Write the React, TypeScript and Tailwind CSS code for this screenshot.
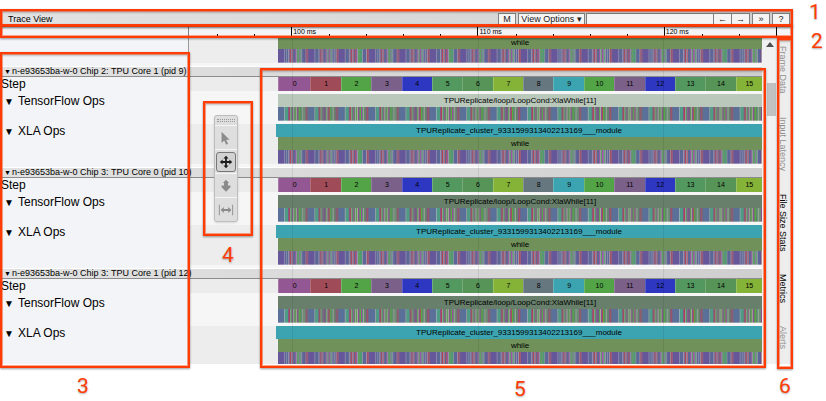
import type { ReactNode } from "react";

type Stripe = [offset: number, width: number, color: string];

const PERIOD = 30;
const STEPS = 16;

const OPS_STRIPES: Stripe[] = [
  [0, 6, "#5b7098"], [6, 1, "#93a9b5"], [7, 3, "#4f9c86"], [10, 1, "#8d548f"],
  [11, 1, "#b0424e"], [12, 1, "#8da08f"], [13, 1, "#54936b"], [14, 1, "#8c5f93"],
  [17, 1, "#59a251"], [18, 1, "#a3a99b"], [19, 1, "#8b5290"], [21, 1, "#4fb040"],
  [23, 1, "#5c9677"], [24, 1, "#9aa59c"], [27, 1, "#84538b"], [28, 1, "#a6525e"],
  [29, 1, "#70628f"],
];

const OPS_EXTRAS: Stripe[][] = [
  [[15, 1, "#96a896"], [25, 2, "#6f8c74"]],
  [[20, 1, "#ad4d58"], [15, 2, "#745d86"]],
  [[22, 1, "#a948a0"], [16, 1, "#99a99b"]],
];

const XLA_STRIPES: Stripe[] = [
  [0, 6, "#66569a"], [6, 1, "#8d85ad"], [7, 3, "#5b6797"], [10, 1, "#9b91b0"],
  [11, 1, "#7d6b91"], [12, 1, "#b34550"], [13, 1, "#8f88a6"], [14, 1, "#b46b78"],
  [15, 2, "#5b6797"], [17, 1, "#9859a0"], [18, 1, "#9b96a7"], [19, 2, "#5e9d63"],
  [21, 1, "#8c8199"], [22, 1, "#61a878"], [23, 1, "#9495a5"], [24, 3, "#5c6698"],
  [27, 1, "#a5919f"], [28, 1, "#a34e66"], [29, 1, "#9b5d78"],
];

const XLA_EXTRAS: Stripe[][] = [
  [[8, 1, "#7f89a9"], [26, 1, "#67568f"]],
  [[20, 1, "#a34eb0"], [25, 1, "#8b8fa9"]],
  [[16, 1, "#a85567"], [21, 2, "#4f9c70"]],
];

function Stripes({ kind }: { kind: "ops" | "xla" }) {
  const base = kind === "ops" ? OPS_STRIPES : XLA_STRIPES;
  const extras = kind === "ops" ? OPS_EXTRAS : XLA_EXTRAS;
  const fill = kind === "ops" ? "#688069" : "#75719a";
  return (
    <svg
      className="block h-[14px] w-full"
      viewBox={`0 0 ${PERIOD * STEPS - 2} 14`}
      preserveAspectRatio="none"
      aria-hidden="true"
    >
      <rect width={PERIOD * STEPS} height="14" fill={fill} />
      {Array.from({ length: STEPS }, (_, step) =>
        [...base, ...extras[step % 3]].map(([offset, width, color], i) => (
          <rect key={`${step}-${i}`} x={step * PERIOD + offset} width={width} height="14" fill={color} />
        )),
      )}
      <rect y="13" width={PERIOD * STEPS} height="1" fill="#ffffff" opacity="0.3" />
    </svg>
  );
}

const STEP_COLORS = [
  "bg-[#935893]", "bg-[#a04b58]", "bg-[#52a446]", "bg-[#7b6089]",
  "bg-[#2d37c1]", "bg-[#53985f]", "bg-[#579458]", "bg-[#85b338]",
  "bg-[#67777f]", "bg-[#3ca4b0]", "bg-[#52a446]", "bg-[#7b6089]",
  "bg-[#2d37c1]", "bg-[#53985f]", "bg-[#579458]", "bg-[#85b338]",
];

function StepBar() {
  return (
    <div className="grid h-[14px] grid-cols-[32fr_repeat(14,30fr)_26fr]">
      {STEP_COLORS.map((color, i) => (
        <div
          key={i}
          className={`${color} border-l border-white/20 text-center text-[7px] leading-[14px] text-black`}
        >
          {i}
        </div>
      ))}
    </div>
  );
}

function Bar({ className, clipped, children }: { className: string; clipped?: boolean; children: ReactNode }) {
  return (
    <div
      className={`truncate text-center text-[8px] text-black ${
        clipped ? "h-[11px] leading-[9px]" : "h-[13px] leading-[13px]"
      } ${className}`}
    >
      {children}
    </div>
  );
}

function Track({ label, collapsible, padded, shade, children }: {
  label?: string;
  collapsible?: boolean;
  padded?: boolean;
  shade: string;
  children: ReactNode;
}) {
  const padding = padded ? "py-[3px]" : "";
  return (
    <div className="flex">
      <div
        className={`w-[189px] shrink-0 border-r border-[#999999] bg-[#f3f4f7] text-xs leading-[15px] text-black ${padding}`}
      >
        {collapsible ? (
          <button type="button" className="flex items-center pl-1">
            <span className="w-[14px] text-left text-[10px]">▼</span>
            {label}
          </button>
        ) : (
          <div className="h-[14px] pl-px">{label}</div>
        )}
      </div>
      <div className={`min-w-0 flex-1 pl-[89px] ${shade} ${padding}`}>{children}</div>
    </div>
  );
}

function TrackGap() {
  return (
    <div className="flex h-1 border-b border-white">
      <div className="w-[189px] border-r border-[#999999] bg-[#f3f4f7]" />
      <div className="flex-1 bg-[#f6f6f6]" />
    </div>
  );
}

function GridLines() {
  return (
    <div className="pointer-events-none absolute inset-y-0 right-0 left-[189px]">
      <div className="absolute inset-y-0 left-[18%] w-px bg-black/8" />
      <div className="absolute inset-y-0 left-[50.4%] w-px bg-black/8" />
      <div className="absolute inset-y-0 left-[82.7%] w-px bg-black/8" />
    </div>
  );
}

function Chip({ name, highlighted }: { name: string; highlighted?: boolean }) {
  return (
    <section className="relative h-[101px]">
      <header className="h-[10px] border-b border-[#8c8c8c] bg-linear-to-r from-[#e2e2e2] to-[#cfcfcf]">
        <button type="button" className="flex items-center pl-1 text-[9px] leading-[9px] whitespace-nowrap text-black">
          <span className="w-2 text-left text-[7px]">▼</span>
          {name}
        </button>
      </header>
      <Track label="Step" shade="bg-[#ececec]">
        <StepBar />
      </Track>
      <Track label="TensorFlow Ops" collapsible padded shade="bg-[#f6f6f6]">
        <Bar className={highlighted ? "bg-[#b9c8ba]" : "bg-[#68806b]"}>
          TPUReplicate/loop/LoopCond:XlaWhile[11]
        </Bar>
        <Stripes kind="ops" />
      </Track>
      <Track label="XLA Ops" collapsible shade="bg-[#ededed]">
        <Bar className="-ml-[2px] bg-[#3ca4b0]">TPUReplicate_cluster_9331599313402213169___module</Bar>
        <Bar className="bg-[#70915a]">while</Bar>
        <Stripes kind="xla" />
      </Track>
      <TrackGap />
      <GridLines />
    </section>
  );
}

function Callout({ className }: { className: string }) {
  return (
    <div
      className={`pointer-events-none absolute border-2 border-[#ff3c05] shadow-[0_1px_2px_rgba(0,0,0,0.4),inset_0_0_0_1px_rgba(255,60,5,0.45),inset_0_2px_2px_rgba(0,0,0,0.2)] ${className}`}
    />
  );
}

function CalloutNumber({ className, children }: { className: string; children: ReactNode }) {
  return (
    <span
      className={`pointer-events-none absolute w-3 text-center font-[Roboto,sans-serif] text-[21px] leading-6 text-[#ff3c05] [text-shadow:0_1px_2px_rgba(0,0,0,0.35)] ${className}`}
    >
      {children}
    </span>
  );
}

function Toolbar() {
  const button = "h-[13px] border border-[#808080] bg-[#f4f4f4] text-center leading-[11px] text-[#222222]";
  return (
    <div className="flex h-[18px] items-center bg-linear-to-r from-[#e2e2e2] to-[#d0d0d0] px-[3px] pt-[2px] text-[9px]">
      <h1 className="flex-1 pl-[5px] leading-[11px] text-black">Trace View</h1>
      <div className="flex">
        <button type="button" className={`${button} w-[18px]`}>M</button>
        <button type="button" className={`${button} ml-[2px] w-[67px] whitespace-nowrap`}>
          View Options ▾
        </button>
        <input type="text" aria-label="Find" className={`${button} ml-px w-[128px]`} />
        <button type="button" aria-label="Previous" className={`${button} -ml-px w-[19px]`}>←</button>
        <button type="button" aria-label="Next" className={`${button} -ml-px w-[19px]`}>→</button>
        <button type="button" className={`${button} ml-[2px] w-[18px]`}>»</button>
        <button type="button" className={`${button} ml-[2px] w-[18px]`}>?</button>
      </div>
    </div>
  );
}

const TICK_LABELS: Record<number, string> = { 2: "100 ms", 7: "110 ms", 12: "120 ms" };

function Ruler() {
  return (
    <div className="flex h-[11px] bg-[#f4f4f6]">
      <div className="w-[189px] shrink-0 border-r border-[#808080]" />
      <div className="ml-7 flex flex-1 items-end border-r border-black pb-[2px]">
        {Array.from({ length: 15 }, (_, i) =>
          TICK_LABELS[i] ? (
            <div key={i} className="h-full flex-1 basis-0 border-l border-black pl-px text-[7px] leading-[9px] whitespace-nowrap text-black">
              {TICK_LABELS[i]}
            </div>
          ) : (
            <div key={i} className="h-[2px] flex-1 basis-0 border-l border-black" />
          ),
        )}
      </div>
      <div className="w-4" />
    </div>
  );
}

const TOOLS: { name: string; icon: ReactNode }[] = [
  { name: "Selection", icon: <path d="M4 2v12.500l3-2.700 2.200 4.700 2.100-1-2.200-4.500H13z" /> },
  {
    name: "Pan",
    icon: <path d="M9 2l2.800 3.200H10V8h2.800V6.200L16 9l-3.200 2.800V10H10v2.800h1.800L9 16l-2.800-3.200H8V10H5.200v1.800L2 9l3.200-2.800V8H8V5.200H6.200z" />,
  },
  { name: "Zoom", icon: <path d="M9 2l3.600 3.600h-1.400V8.500h2.800v1.800L9 15.500 4 10.300V8.500h2.800V5.600H5.400z" /> },
  {
    name: "Timing",
    icon: <path d="M1 3h1v12H1zM16 3h1v12h-1zM3 9l3.500-3.500v2.500h5V5.500L15 9l-3.500 3.500V10h-5v2.500z" />,
  },
];

function ToolPalette() {
  return (
    <div className="absolute top-[115px] left-[214px] w-6 rounded-[3px] border border-[#bdbdbd] bg-[#dedede] shadow-sm">
      <div className="flex h-[9px] flex-col justify-center gap-px px-[2px]">
        <div className="border-t border-dotted border-[#999999]" />
        <div className="border-t border-dotted border-[#999999]" />
      </div>
      {TOOLS.map(({ name, icon }) => {
        const active = name === "Pan";
        return (
          <div key={name} className="flex h-6 items-center justify-center border-t border-[#f5f5f5]">
            <button
              type="button"
              aria-label={name}
              className={`flex size-5 items-center justify-center rounded-[3px] border ${
                active ? "border-[#777777] bg-[#d2d2d2]" : "border-transparent"
              }`}
            >
              <svg viewBox="0 0 18 18" className="size-4" fill={active ? "#1c1c1c" : "#8b8b8b"}>
                {icon}
              </svg>
            </button>
          </div>
        );
      })}
    </div>
  );
}

const SIDE_TABS = [
  { label: "Frame Data", enabled: false },
  { label: "Input Latency", enabled: false },
  { label: "File Size Stats", enabled: true },
  { label: "Metrics", enabled: true },
  { label: "Alerts", enabled: false },
];

export default function App() {
  return (
    <div className="relative bg-white pt-[9px] pr-[33px] pb-10 font-['Liberation_Sans',Arial,sans-serif]">
      <Toolbar />
      <Ruler />
      <div className="flex h-[326px]">
        <main className="min-w-0 flex-1 overflow-hidden">
          <div className="relative">
            <Track shade="bg-[#ededed]">
              <Bar className="bg-[#70915a]" clipped>while</Bar>
              <Stripes kind="xla" />
            </Track>
            <TrackGap />
            <GridLines />
          </div>
          <Chip name="n-e93653ba-w-0 Chip 2: TPU Core 1 (pid 9)" highlighted />
          <Chip name="n-e93653ba-w-0 Chip 3: TPU Core 0 (pid 10)" />
          <Chip name="n-e93653ba-w-0 Chip 3: TPU Core 1 (pid 12)" />
        </main>
        <div className="flex w-[15px] flex-col items-center bg-[#f1f1f1] pt-1">
          <div className="border-x-4 border-b-[5px] border-x-transparent border-b-[#505050]" />
          <div className="mt-9 ml-1 h-[33px] w-[9px] bg-[#c1c1c1]" />
        </div>
        <nav className="flex w-4 flex-col items-center gap-[23px] bg-[#ededed] pt-2 text-[9px] leading-3 whitespace-nowrap">
          {SIDE_TABS.map(({ label, enabled }) => (
            <button
              key={label}
              type="button"
              disabled={!enabled}
              className={`mr-1 [writing-mode:vertical-rl] ${enabled ? "text-black" : "text-[#8f8f8f]"}`}
            >
              {label}
            </button>
          ))}
        </nav>
      </div>
      <ToolPalette />

      <Callout className="top-[9px] right-[33px] left-0 h-[18px]" />
      <Callout className="top-[24px] right-[33px] left-0 h-[14px]" />
      <Callout className="top-[52px] left-0 h-[316px] w-[190px]" />
      <Callout className="top-[101px] left-[203px] h-[135px] w-[50px]" />
      <Callout className="top-[68px] right-[60px] left-[260px] h-[300px]" />
      <Callout className="top-[38px] right-[33px] h-[331px] w-4" />
      <CalloutNumber className="top-0 right-[5px]">1</CalloutNumber>
      <CalloutNumber className="top-[29px] right-[3px]">2</CalloutNumber>
      <CalloutNumber className="top-[374px] left-[77px]">3</CalloutNumber>
      <CalloutNumber className="top-[243px] left-[222px]">4</CalloutNumber>
      <CalloutNumber className="top-[377px] right-[300px]">5</CalloutNumber>
      <CalloutNumber className="top-[374px] right-[35px]">6</CalloutNumber>
    </div>
  );
}
